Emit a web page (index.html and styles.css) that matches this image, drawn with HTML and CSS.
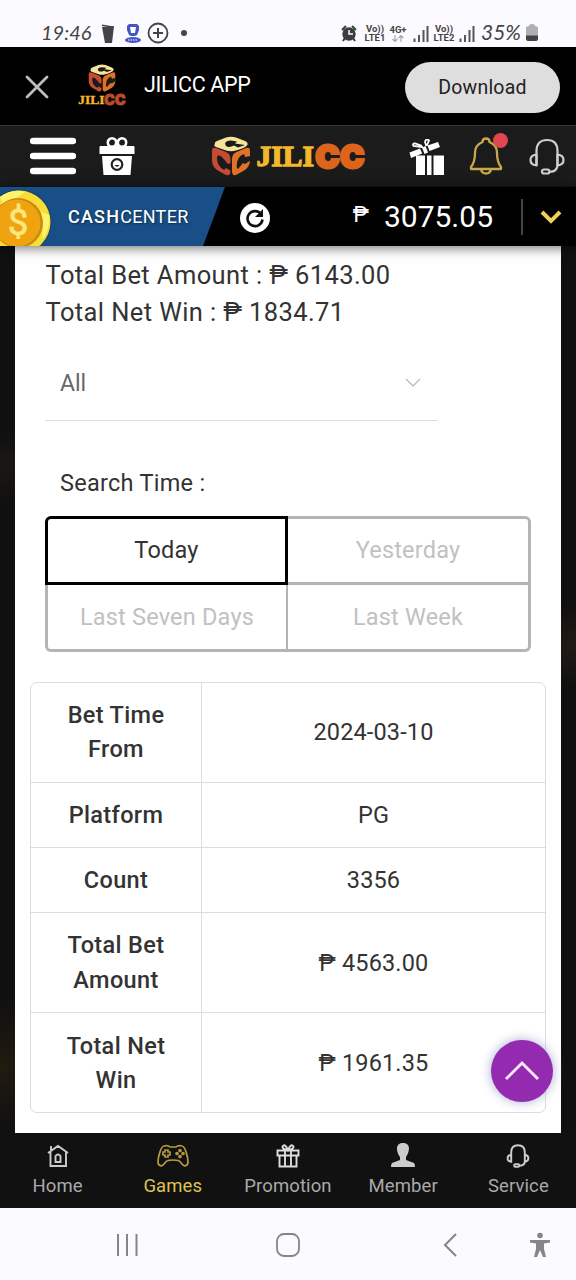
FILE: index.html
```html
<!DOCTYPE html>
<html lang="en">
<head>
<meta charset="utf-8">
<title>JILICC</title>
<link rel="stylesheet" href="styles.css">
</head>
<body>
<svg class="defs" width="0" height="0" aria-hidden="true">
  <symbol id="cube" viewBox="0 0 40 40">
    <path fill="#f6e49a" d="M4 8Q3 6.500 6 5L15 1.500Q20 0 25 1.500L34 5Q38 7 36 9.500Q34 12 25 14.500Q20 16 15 14.500L5 11Q2 9.500 4 8Z"/>
    <path fill="#1b1b1b" d="M14 7.500Q15 4.500 20 4.500L26 5.500 24 7.500 34 9 27 11.500 23 9.500Q18 12 15 10Z"/>
    <path fill="#c64b34" d="M1 15Q1 10.500 5 12L15 16Q19.500 18 19.500 23V35Q19.500 41 14 38.500L6 34Q1 30 1 24Z"/>
    <path fill="#1b1b1b" d="M6 22Q6 17 11 21L17 28 20 27V35L15 32 13 34Q6 30 6 22Z"/>
    <path fill="#e07227" d="M39 15Q39 10.500 35 12L25.500 16Q21 18 21 23V35Q21 41 26 38.500L34 34Q39 30 39 24Z"/>
    <path fill="#1b1b1b" d="M26 27Q27 20 33 18L34 21 40 20V24L34 28 32 27 27 33Q25 32 26 27Z"/>
  </symbol>
  <symbol id="headset" viewBox="0 0 36 37">
    <g fill="none" stroke="currentColor" stroke-width="2.200" stroke-linecap="round" stroke-linejoin="round">
      <path d="M7.500 27V13C7.500 5.500 11.500 2 18 2s10.500 3.500 10.500 11v14"/>
      <path d="M7.500 16.500C3.500 17 1.500 19 1.500 22s2 5 6 5.500zM28.500 16.500c4 .5 6 2.500 6 5.500s-2 5-6 5.500z"/>
      <path d="M28.500 27q0 6.500-8 7"/><rect x="13" y="31.500" width="7.500" height="4" rx="2"/>
    </g>
  </symbol>
</svg>

<header class="status">
  <span class="clock">19:46</span>
  <svg class="status-icons" width="92" height="24" viewBox="0 0 92 24">
    <path fill="#444" d="M0 6l12-1-2 17H3zM0 3.500l12 2v1L0 5z"/>
    <path fill="#4655c5" d="M25 5l2-2h8l2 2v4l-2 5-2 1h-4l-2-1-2-5z"/><path fill="#fff" d="M28 6h6l-1 6h-4z"/><ellipse cx="31" cy="19" rx="8" ry="3" fill="#4655c5"/><path d="M26 19h10" stroke="#fff" stroke-width="1" stroke-dasharray="1.500 1"/>
    <circle cx="56" cy="12" r="9.500" fill="none" stroke="#444" stroke-width="1.800"/><path d="M51 12h10M56 7v10" stroke="#444" stroke-width="2"/>
    <circle cx="82" cy="12" r="3" fill="#444"/>
  </svg>
  <span class="spacer"></span>
  <svg width="16" height="17" viewBox="0 0 16 17"><path d="M1 5l4-4M15 5l-4-4M4 13l-2 3M12 13l2 3" stroke="#3c3c3c" stroke-width="2"/><circle cx="8" cy="9" r="6.700" fill="#3c3c3c"/><path d="M8 5v4h4" fill="none" stroke="#fff" stroke-width="1.500"/></svg>
  <span class="net volte1">Vo))<br>LTE1</span>
  <span class="net net4g">4G+<br><svg width="12" height="7" viewBox="0 0 12 7"><path d="M3 0v6M.5 4L3 6.500 5.500 4M9 7V1M6.500 3L9 .5 11.500 3" fill="none" stroke="#aaa" stroke-width="1.200"/></svg></span>
  <svg class="bars1" width="16" height="17" viewBox="0 0 16 17"><path d="M1.500 17v-3.500M6 17v-7M10.500 17V5M14.500 17V1" stroke="#555" stroke-width="2"/></svg>
  <span class="net volte2">Vo))<br>LTE2</span>
  <svg class="bars2" width="16" height="17" viewBox="0 0 16 17"><path d="M1.500 17v-3.500M6 17v-7M10.500 17V5M14.500 17V1" stroke="#555" stroke-width="2"/></svg>
  <span class="percent">35%</span>
  <svg width="12" height="18" viewBox="0 0 12 18"><path fill="#b0b0b0" d="M0 4q0-2 3-2 0-2 3-2t3 2q3 0 3 2v8H0z"/><path fill="#444" d="M0 11.500h12V15q0 2-2 2H2q-2 0-2-2z"/></svg>
</header>

<section class="appbar">
  <svg class="close" width="24" height="24" viewBox="0 0 24 24"><path d="M2 2l20 20M22 2L2 22" stroke="#bdbdbd" stroke-width="2.800" stroke-linecap="round"/></svg>
  <div class="mini-logo"><svg width="28" height="28"><use href="#cube"/></svg><div class="wordmark small"><span>JILI</span><b>CC</b></div></div>
  <span class="app-name">JILICC APP</span>
  <button class="download">Download</button>
</section>

<section class="header">
  <svg class="burger" width="46" height="38" viewBox="0 0 46 38"><path d="M3 4h40M3 19h40M3 34h40" stroke="#fff" stroke-width="6.400" stroke-linecap="round"/></svg>
  <svg class="giftbox" width="36" height="38" viewBox="0 0 36 38"><g fill="none" stroke="#fff" stroke-width="2.600"><circle cx="13" cy="5.500" r="4.200"/><circle cx="23" cy="5.500" r="4.200"/></g><path fill="#fff" d="M1.500 9h33q1 0 1 1v7H.5v-7q0-1 1-1zM3 19h30l-1.500 19h-27zM16 6h4v4h-4z"/><circle cx="18" cy="27.500" r="5.300" fill="none" stroke="#222" stroke-width="2.200"/><path d="M15.500 28q2.500 3.500 5 0z" fill="#222"/></svg>
  <div class="logo"><svg width="40" height="40"><use href="#cube"/></svg><div class="wordmark"><span>JILI</span><b>CC</b></div></div>
  <svg class="gift" width="36" height="36" viewBox="0 0 36 36"><g fill="#fff"><path d="M7 16.500h9V36H7zM18 16.500h4.500V36H18zM24.500 16.500H35V36H24.500z"/><path d="M.5 13.500L11 9.500l2.200 5L2 19zM13 8.500l3.500-1.500 2.500 6.500-3.500 1.500zM18.500 6.500L29 3l2 5-10.500 4z"/></g><path d="M13 8L4.500 7Q3 4.500 6 4.500L12 6.500zM17 6l-1-3q1-4 4-1.500L18 6z" fill="none" stroke="#fff" stroke-width="1.800"/></svg>
  <div class="bell"><svg width="34" height="38" viewBox="0 0 34 38"><path fill="none" stroke="#c9a84a" stroke-width="2.300" stroke-linejoin="round" d="M13.500 5q0-3.500 3.500-3.500t3.500 3.500Q28 8 28 16q0 9 4 14v2H2v-2q4-5 4-14 0-8 7.500-11zM12 32.500q1 4 5 4t5-4"/></svg><i class="dot"></i></div>
  <svg class="support" width="36" height="37"><use href="#headset"/></svg>
</section>

<section class="cash">
  <div class="cash-center">
    <svg class="coin" width="64" height="59" viewBox="0 0 64 59"><circle cx="19" cy="35" r="33" fill="#174876"/><circle cx="19" cy="35" r="31.500" fill="#f7dd35"/><path d="M0 10q12-9 25-5L4 19zM43 52q8-12 6-24l-8-3z" fill="#fff36d"/><circle cx="18" cy="36" r="25" fill="#c78912"/><circle cx="17" cy="36" r="23.500" fill="#f0a311"/><text class="coin-sign" x="18" y="48" text-anchor="middle">$</text></svg>
    <span class="cash-text"><b>CASH</b>CENTER</span>
  </div>
  <svg class="refresh" width="30" height="30" viewBox="0 0 30 30"><circle cx="15" cy="15" r="15" fill="#fff"/><path d="M21 11a7.500 7.500 0 1 0 1.500 5.500" fill="none" stroke="#111" stroke-width="2.600"/><path d="M23 6v8h-8z" fill="#111"/></svg>
  <span class="spacer"></span>
  <span class="balance"><small>₱</small>3075.05</span>
  <i class="divider"></i>
  <svg class="more" width="22" height="14" viewBox="0 0 22 14"><path d="M2 2l9 9 9-9" fill="none" stroke="#efcf5a" stroke-width="4"/></svg>
</section>

<main class="page">
  <div class="panel">
    <div class="totals"><p>Total Bet Amount : ₱ 6143.00</p><p>Total Net Win : ₱ 1834.71</p></div>
    <div class="select"><span>All</span><svg width="16" height="10" viewBox="0 0 16 10"><path d="M1 1l7 7 7-7" fill="none" stroke="#bbb" stroke-width="1.300"/></svg></div>
    <p class="label">Search Time :</p>
    <div class="ranges">
      <button class="range active">Today</button><button class="range yesterday">Yesterday</button>
      <button class="range seven">Last Seven Days</button><button class="range week">Last Week</button>
    </div>
    <div class="table">
      <div class="row tall"><b>Bet Time<br>From</b><span>2024-03-10</span></div>
      <div class="row"><b>Platform</b><span>PG</span></div>
      <div class="row"><b>Count</b><span>3356</span></div>
      <div class="row tall"><b>Total Bet<br>Amount</b><span>₱ 4563.00</span></div>
      <div class="row tall"><b>Total Net<br>Win</b><span>₱ 1961.35</span></div>
    </div>
  </div>
  <button class="to-top"><svg width="36" height="22" viewBox="0 0 36 22"><path d="M2 19L18 3l16 16" fill="none" stroke="#fbe6ff" stroke-width="3"/></svg></button>
</main>

<nav class="tabs">
  <a><svg width="24" height="24" viewBox="0 0 24 24"><path fill="none" stroke="#ccc" stroke-width="1.900" d="M2 9L12 2l10 7M4.500 8v14h15.500V8M5 7V2M9.500 18v-6q2.500-3 5 0v6z"/></svg>Home</a>
  <a class="on"><svg width="32" height="24" viewBox="0 0 32 24"><g fill="none" stroke="#b59b40" stroke-width="1.700"><path d="M7 2q4-1 6 1h6q2-2 6-1c3 0 6 11 6 16 0 4-4 5-6 2-3-4-4-4-9-4s-6 0-9 4c-2 3-6 2-6-2C1 13 4 2 7 2z"/><path d="M8 6h3v2h2v3h-2v2H8v-2H6V8h2z"/><circle cx="23" cy="6.500" r="1"/><circle cx="20" cy="9.500" r="1"/><circle cx="26" cy="9.500" r="1"/><circle cx="23" cy="12.500" r="1"/></g></svg>Games</a>
  <a><svg width="24" height="24" viewBox="0 0 24 24"><path fill="none" stroke="#ddd" stroke-width="1.900" d="M1.500 6.500h21v5h-21zM3.500 11.500v11h17v-11M9 7v15M15 7v15M12 6Q6 5 6.500 2.500 9-1 12 6q3-7 5.500-3.500Q18 5 12 6z"/></svg>Promotion</a>
  <a><svg width="26" height="26" viewBox="0 0 26 26"><path fill="#ccc" d="M13 1c9 0 6 10 3 14v3l8 3q1 1 1 4H1q0-3 1-4l8-3v-3C7 11 4 1 13 1z"/></svg>Member</a>
  <a class="service"><svg width="24" height="24" viewBox="0 0 36 37"><g fill="none" stroke="#ccc" stroke-width="3"><path d="M7.500 27V13C7.500 5.500 11.500 2 18 2s10.500 3.500 10.500 11v14M7.500 16.500C3.500 17 2 19 2 22s1.500 5 5.500 5.500zM28.500 16.500c4 .5 5.500 2.500 5.500 5.500s-1.500 5-5.500 5.500zM28.500 27q0 6-8 6.500"/><rect x="12" y="31" width="8" height="4" rx="2"/></g></svg>Service</a>
</nav>

<footer class="system">
  <svg class="recent" width="24" height="24" viewBox="0 0 24 24"><path d="M3 1v22M12 1v22M21.500 1v22" stroke="#858585" stroke-width="2"/></svg>
  <svg class="home" width="26" height="26" viewBox="0 0 26 26"><rect x="2" y="2" width="22" height="22" rx="7" fill="none" stroke="#858585" stroke-width="1.800"/></svg>
  <svg class="back" width="16" height="26" viewBox="0 0 16 26"><path d="M14 2L3 13l11 11" fill="none" stroke="#858585" stroke-width="2"/></svg>
  <svg class="access" width="22" height="26" viewBox="0 0 22 26"><g fill="#858585"><circle cx="11" cy="3.500" r="2.800"/><path d="M1 8h20v2.500l-6 1V17l2 8h-3l-3-7-3 7H5l2-8v-5.500l-6-1z"/></g></svg>
</footer>
</body>
</html>
```
FILE: styles.css
```css
* { box-sizing: border-box; }
body { margin: 0; width: 576px; height: 1280px; overflow: hidden; display: flex; flex-direction: column; font-family: Roboto, "Open Sans", sans-serif; color: #333; background: #000; }
button { font: inherit; padding: 0; margin: 0; border: 0; }
p { margin: 0; }
svg { flex: none; display: block; }
.defs { position: absolute; }
.spacer { flex: 1; }

.status { height: 47px; flex: none; background: #fbfaff; display: flex; align-items: center; padding: 19px 38px 0 41px; }
.clock, .percent { font-family: Lato, sans-serif; font-style: italic; font-size: 20px; line-height: 20px; color: #444; margin-top: -3px; }
.clock { width: 61px; }
.percent { font-size: 21px; margin-left: 6px; width: 45px; }
.net { font-size: 9.500px; line-height: 9px; font-weight: 700; color: #444; text-align: center; white-space: nowrap; }
.net svg { margin: 1px auto 0; }
.volte1 { margin-left: 7px; width: 22px; }
.net4g { margin-left: 3px; width: 18px; }
.bars1 { margin-left: 6px; }
.volte2 { margin-left: 4px; width: 22px; }
.bars2 { margin-left: 4px; }

.appbar { height: 78px; flex: none; background: #000; display: flex; align-items: center; padding: 3px 16px 0 25px; }
.close { margin-top: -1px; }
.mini-logo { width: 50px; margin-left: 28px; margin-top: -4px; display: flex; flex-direction: column; align-items: center; }
.app-name { margin-left: 17px; margin-top: -6px; font-size: 21.500px; color: #fff; flex: 1; white-space: nowrap; letter-spacing: -.3px; }
.download { width: 155px; height: 51px; border-radius: 26px; background: #dedede; color: #222; font-size: 19.500px; letter-spacing: .2px; }

.wordmark { display: flex; align-items: center; white-space: nowrap; }
.wordmark span { font-family: "Liberation Serif", serif; font-weight: 700; font-size: 29.500px; line-height: 31px; color: #f3b72b; -webkit-text-stroke: 1.300px #f3b72b; width: 59px; }
.wordmark b { font-family: Inter, sans-serif; font-weight: 900; font-size: 32px; line-height: 31px; letter-spacing: .8px; color: #dc641c; -webkit-text-stroke: 3px #dc641c; }
.wordmark.small span { font-size: 13.500px; line-height: 15px; width: 26px; -webkit-text-stroke-width: .4px; }
.wordmark.small b { font-size: 14px; line-height: 15px; letter-spacing: .2px; color: #b94d2a; -webkit-text-stroke: .9px #b94d2a; }

.header { height: 61px; flex: none; background: #1b1b1b; border-top: 1px solid #393939; display: flex; align-items: center; padding: 0 11px 0 29.500px; }
.giftbox { margin-left: 23px; }
.logo { display: flex; align-items: center; gap: 6px; margin-left: 76px; width: 158px; }
.gift { margin-left: 40px; margin-top: 2px; }
.bell { position: relative; margin-left: 24px; }
.dot { position: absolute; left: 24px; top: -4px; width: 15px; height: 15px; border-radius: 50%; background: #e24650; }
.support { margin-left: auto; color: #cfcfcf; }

.cash { height: 60px; flex: none; background: #000; border-top: 1px solid #111; display: flex; align-items: center; padding-right: 14px; position: relative; z-index: 2; box-shadow: 0 2px 11px rgba(0,0,0,.55); }
.cash-center { width: 225px; height: 59px; background: #184f86; clip-path: polygon(0 0, 100% 0, 203px 100%, 0 100%); display: flex; align-items: center; }
.coin-sign { font: 36px Roboto, sans-serif; fill: #fbe77c; stroke: #fbe77c; stroke-width: .8px; }
.cash-text { margin-left: 4px; color: #fff; font-size: 18px; letter-spacing: .3px; text-shadow: 1px 1px 2px #092a4a; }
.cash-text b { font-weight: 500; letter-spacing: 1.200px; }
.refresh { margin-left: 15px; margin-top: 2px; }
.balance { color: #fff; font-size: 30px; display: flex; align-items: center; white-space: nowrap; }
.balance small { font-size: 22px; margin-right: 15px; margin-top: -5px; }
.divider { width: 2px; height: 36px; background: #444; margin: 0 17px 0 28px; }

.page { height: 887px; flex: none; padding: 0 15px; position: relative; background: radial-gradient(circle at 3px 220px, #1c1713 0, transparent 35px), radial-gradient(circle at 572px 400px, #221b15 0, transparent 42px), radial-gradient(circle at 2px 820px, #211b10 0, transparent 65px), #101010; }
.panel { height: 887px; background: #fff; padding: 10.500px 15px 0; }
.totals { padding-left: 15.500px; font-size: 25.500px; line-height: 37.500px; letter-spacing: .4px; }
.select { margin: 23.500px 0 0 15px; width: 393px; height: 66px; border-bottom: 1px solid #ddd; padding: 0 17px 9px 15px; display: flex; justify-content: space-between; align-items: center; font-size: 23px; color: #666; }
.label { margin: 44px 0 0 30px; font-size: 23.500px; line-height: 36px; letter-spacing: .27px; }
.ranges { margin: 15px 0 0 15px; width: 486px; height: 136px; display: grid; grid-template-columns: 243px 243px; grid-template-rows: 69px 67px; }
.range { background: #fff; border: 0 solid #b4b4b4; font-size: 23.500px; letter-spacing: .2px; color: #c1c1c1; padding-bottom: 1px; }
.active { border: 3px solid #000; border-radius: 6px 0 0 0; color: #333; }
.yesterday { border-width: 3px 3px 3px 0; border-radius: 0 6px 0 0; }
.seven { border-width: 0 2px 3px 3px; border-radius: 0 0 0 6px; }
.week { border-width: 0 3px 3px 0; border-radius: 0 0 6px 0; }
.table { margin-top: 30px; border: 1px solid #ddd; border-radius: 7px; height: 431px; font-size: 23.500px; line-height: 34.500px; letter-spacing: .15px; overflow: hidden; }
.row { height: 65.300px; display: grid; grid-template-columns: 171px 1fr; border-bottom: 1px solid #ddd; text-align: center; }
.row:last-child { border-bottom: 0; }
.row.tall { height: 99.800px; }
.row b { font-weight: 500; letter-spacing: .35px; border-right: 1px solid #ddd; }
.row b, .row span { display: flex; align-items: center; justify-content: center; }
.to-top { position: absolute; left: 491px; top: 794px; width: 62px; height: 62px; border-radius: 50%; background: #942aaf; box-shadow: 0 0 11px #a9abd5; display: grid; place-items: center; }

.tabs { height: 75px; flex: none; background: #111; display: grid; grid-template-columns: repeat(5, 1fr); color: #aaa; font-size: 18.500px; line-height: 24px; letter-spacing: .1px; }
.tabs a { display: flex; flex-direction: column; align-items: center; justify-content: flex-end; padding-bottom: 10px; gap: 6px; }
.tabs .on { color: #dfc252; }
.system { height: 72px; flex: none; background: #fbfaff; display: flex; align-items: center; padding: 2px 25px 0 115px; }
.home { margin-left: 136px; }
.back { margin-left: 141px; }
.access { margin-left: auto; }
```
